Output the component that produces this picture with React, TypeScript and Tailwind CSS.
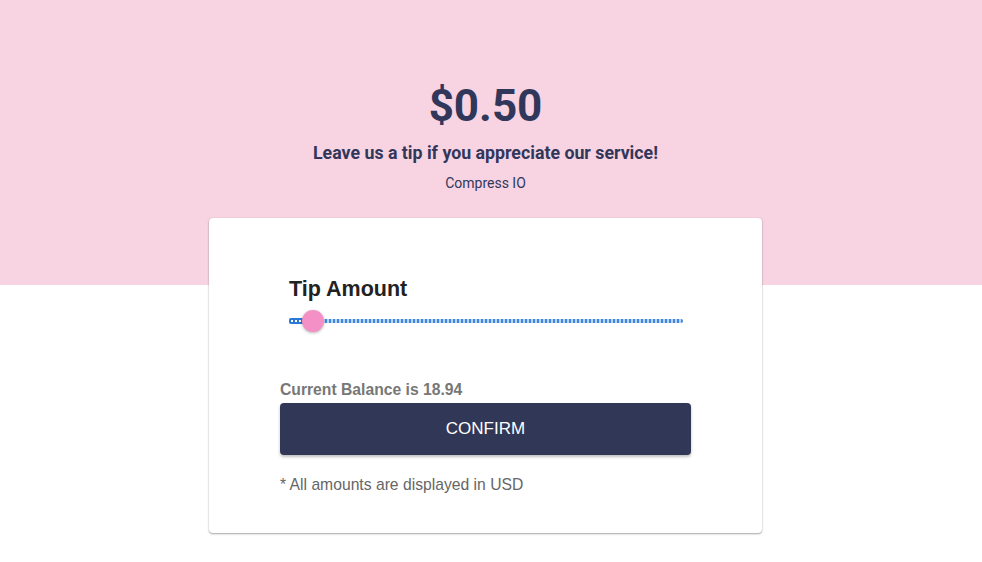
import React from "react";

export default function App() {
  return (
    <div className="min-h-[562px] w-full bg-white" style={{ fontFamily: "'Liberation Sans', Arial, sans-serif" }}>
      <div className="h-[285px] bg-[#f8d3e2] pr-[11px] flex flex-col items-center" style={{ fontFamily: "Roboto, 'Liberation Sans', sans-serif" }}>
        <div className="mt-[79px] text-[44px] leading-[54px] font-bold text-[#31375a]">$0.50</div>
        <div className="mt-[9px] text-[17.75px] leading-[22px] font-bold text-[#31375a]">Leave us a tip if you appreciate our service!</div>
        <div className="mt-[10px] text-[14px] leading-[18px] text-[#31375a]">Compress IO</div>
      </div>
      <div className="flex justify-center pr-[11px]">
        <div className="-mt-[67px] w-[553px] bg-white rounded-[4px] shadow-[0_1px_2px_rgba(0,0,0,0.35),0_0_1px_rgba(0,0,0,0.15)] pt-[58px] pb-[39px] px-[71px]">
          <div className="pl-[9px] text-[21.5px] leading-[27px] font-bold text-[#222]">Tip Amount</div>
          <div className="relative mt-[7px] ml-[9px] mr-[8px] h-[22px]">
            <div
              className="absolute left-0 right-0 top-[9px] h-[4px] rounded-[2px]"
              style={{
                backgroundColor: "#bcd6f3",
                backgroundImage: "repeating-linear-gradient(90deg, #3f86e0 0px, #3f86e0 2px, transparent 2px, transparent 4px)",
              }}
            />
            <div
              className="absolute left-0 w-[20px] top-[8px] h-[6px] rounded-[2px]"
              style={{
                backgroundColor: "#2b78d6",
                backgroundImage: "repeating-linear-gradient(90deg, #2b78d6 0px, #2b78d6 2px, #ffffff 2px, #ffffff 4px)",
                backgroundSize: "100% 2px",
                backgroundPosition: "0 2px",
                backgroundRepeat: "no-repeat",
              }}
            />
            <div className="absolute left-[13px] top-0 w-[22px] h-[22px] rounded-full bg-[#f590c7] shadow-[0_1px_3px_rgba(0,0,0,0.3)]" />
          </div>
          <div className="mt-[49px] text-[15.7px] leading-[18px] font-bold text-[#777]">Current Balance is 18.94</div>
          <button className="mt-[4px] w-full h-[52px] rounded-[4px] bg-[#313756] text-white text-[17px] shadow-[0_2px_3px_rgba(0,0,0,0.25)]">
            CONFIRM
          </button>
          <div className="mt-[21px] text-[15.7px] leading-[18px] text-[#666]">* All amounts are displayed in USD</div>
        </div>
      </div>
    </div>
  );
}
